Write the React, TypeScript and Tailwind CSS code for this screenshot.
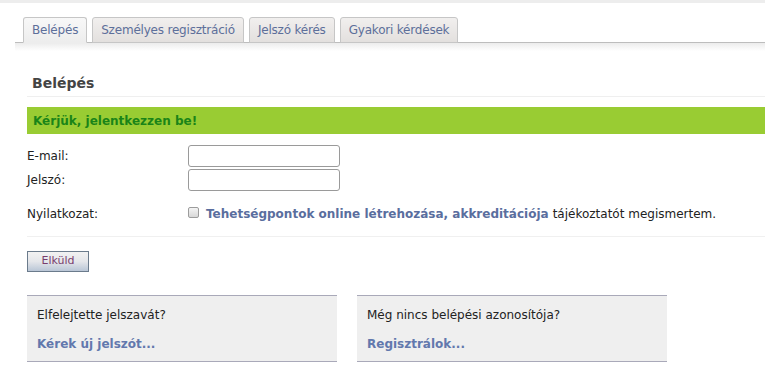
import React from 'react'

const tabs = ['Belépés', 'Személyes regisztráció', 'Jelszó kérés', 'Gyakori kérdések']

const font = { fontFamily: '"DejaVu Sans", Verdana, sans-serif' }

export default function App() {
  return (
    <div className="w-[765px] h-[379px] bg-white overflow-hidden text-[#222]" style={font}>
      <div className="h-[3px] bg-[#ededed]" />

      {/* tabs */}
      <div className="mt-[14px] ml-[15px] border-b border-[#bdbdbd] pl-[8px] flex gap-[5px] items-end">
        {tabs.map((t, i) => (
          <div
            key={t}
            className={`h-[26px] -mb-px px-[8px] flex items-center text-[12px] tracking-[-0.2px] text-[#5d6f9a] border border-[#c6c6c6] rounded-t-[3px] ${
              i === 0 ? 'bg-gradient-to-b from-[#f8f8f8] to-[#ededed] border-b-[#ededed]' : 'bg-gradient-to-b from-[#f1efee] to-[#e3e0de]'
            }`}
          >
            {t}
          </div>
        ))}
      </div>
      <div className="ml-[15px] h-[8px] bg-gradient-to-b from-[#ececec] to-white" />

      <div className="pl-[27px]">
        <h1 className="mt-[24px] pl-[5px] text-[14px] font-bold text-[#444] leading-[17px]">Belépés</h1>
        <div className="mt-[4px] border-b border-[#efefef]" />

        <div className="mt-[10px] h-[27px] bg-[#99cc33] flex items-center pl-[6px] text-[12px] font-bold text-[#1a8418]">
          Kérjük, jelentkezzen be!
        </div>

        <div className="mt-[11px] flex flex-col gap-[2px] text-[12px]">
          <div className="flex items-center h-[22px]">
            <span className="w-[161px]">E-mail:</span>
            <input className="w-[152px] h-[22px] border border-[#9a9a9a] rounded-[3px] bg-white" />
          </div>
          <div className="flex items-center h-[22px]">
            <span className="w-[161px]">Jelszó:</span>
            <input type="password" className="w-[152px] h-[22px] border border-[#9a9a9a] rounded-[3px] bg-white" />
          </div>
        </div>

        <div className="mt-[12px] flex items-center h-[22px] text-[12px]">
          <span className="w-[161px]">Nyilatkozat:</span>
          <span className="w-[11px] h-[11px] border border-[#9c9c9c] rounded-[2px] bg-gradient-to-b from-[#f4f4f4] to-[#d8d8d8] mr-[7px] -mt-[3px]" />
          <span className="font-bold text-[#5a6e9e]">Tehetségpontok online létrehozása, akkreditációja</span>
          <span className="ml-[4px]">tájékoztatót megismertem.</span>
        </div>
        <div className="mt-[11px] border-b border-[#f0f0f0]" />

        <button className="mt-[14px] w-[62px] h-[21px] border border-[#6b7b8c] bg-gradient-to-b from-[#f2f2f2] via-[#e4e6ea] to-[#b9c6d6] text-[11px] text-[#7a3d6d] flex items-center justify-center">
          Elküld
        </button>

        <div className="mt-[23px] flex gap-[20px]">
          <div className="w-[310px] h-[67px] bg-[#efefef] border-y border-[#a9a9b9] pl-[10px] pt-[10px] text-[12px]">
            <div>Elfelejtette jelszavát?</div>
            <div className="mt-[11px] font-bold text-[#6278ad]">Kérek új jelszót...</div>
          </div>
          <div className="w-[310px] h-[67px] bg-[#efefef] border-y border-[#a9a9b9] pl-[10px] pt-[10px] text-[12px]">
            <div>Még nincs belépési azonosítója?</div>
            <div className="mt-[11px] font-bold text-[#6278ad]">Regisztrálok...</div>
          </div>
        </div>
      </div>
    </div>
  )
}
